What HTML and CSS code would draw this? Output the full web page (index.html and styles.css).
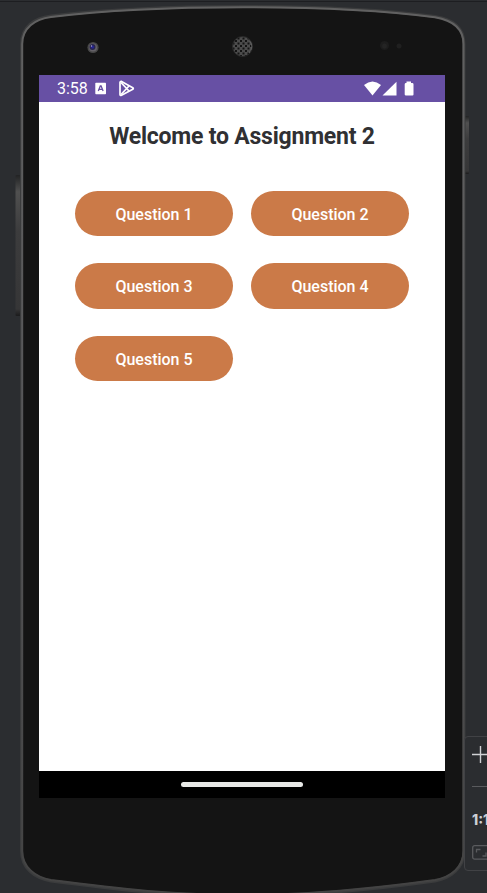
FILE: index.html
```
<!DOCTYPE html>
<html lang="en">
<head>
<meta charset="utf-8">
<title>Assignment 2</title>
<link rel="stylesheet" href="styles.css">
</head>
<body>
<div class="emulator">
  <svg class="device" width="487" height="893" viewBox="0 0 487 893" aria-hidden="true">
    <defs>
      <linearGradient id="key" x1="0" y1="0" x2="0" y2="1">
        <stop offset="0" stop-color="#222324"/><stop offset=".12" stop-color="#505050"/><stop offset=".4" stop-color="#3c3c3d"/><stop offset=".95" stop-color="#363637"/><stop offset="1" stop-color="#1b1b1c"/>
      </linearGradient>
      <linearGradient id="rim" x1="0" y1="0" x2="0" y2="1">
        <stop offset="0" stop-color="#616161"/><stop offset=".5" stop-color="#565658"/><stop offset="1" stop-color="#434343"/>
      </linearGradient>
      <pattern id="mesh" width="5" height="5" patternUnits="userSpaceOnUse">
        <rect width="5" height="5" fill="#4c4c4c"/>
        <path d="M0 0h2v2H0zM2.500 2.500h2v2h-2z" fill="#141414"/>
      </pattern>
    </defs>
    <path d="M0 1.500H487" stroke="#1d1e21"/>
    <rect x="15.500" y="175" width="5" height="141" rx="1" fill="url(#key)"/>
    <rect x="464" y="116" width="5" height="58" rx="1" fill="url(#key)"/>
    <path d="M21.500 44C21.500 27 34 18 51 16C105 9.500 170 6.500 243 6.500S381 9.500 435 16.500C452 19 464 27 464 44V851C464 868 451 878 435 881C370 890 310 896 243 896S120 890 51 881C34 878 21.500 868 21.500 851Z" fill="#141414" stroke="#3b3c3d" stroke-width="3"/>
    <path d="M22.200 44C22.200 28 35 19 51 17C105 10.200 170 7.200 243 7.200S381 10.200 435 17.200C451 20 463.500 28 463.500 44V851C463.500 867 451 877 435 880C370 889 310 895 243 895S120 889 51 880C35 877 22.200 867 22.200 851Z" fill="none" stroke="url(#rim)" stroke-width="2"/>
    <circle cx="93" cy="47.500" r="5.600" fill="#484848"/>
    <circle cx="93" cy="47.500" r="4" fill="#646167"/>
    <circle cx="92.500" cy="47" r="3" fill="#29264f"/>
    <circle cx="92.500" cy="47" r="1.500" fill="#252496"/>
    <circle cx="91.500" cy="46" r=".7" fill="#b3aed0"/>
    <circle cx="242.500" cy="46.500" r="10" fill="url(#mesh)" stroke="#292929"/>
    <path d="M250 41Q254 47 249 53" fill="none" stroke="#666" stroke-width=".8"/>
    <circle cx="384.500" cy="45.500" r="4.500" fill="#1d1d1d"/>
    <circle cx="384.500" cy="46" r="2.500" fill="#242424"/>
    <circle cx="399" cy="46" r="2.500" fill="#202020"/>
  </svg>

  <main class="screen">
    <header class="status-bar">
      <span class="clock">3:58</span>
      <svg class="app-icon" width="12" height="13" viewBox="0 0 12 13"><rect x=".3" y=".7" width="10.700" height="11.600" rx=".7" fill="#fff"/><path d="M3.300 9L5.300 4H6.100L8.100 9M4.200 7.300H7.200" fill="none" stroke="#6750a4" stroke-width="1.300"/></svg>
      <svg class="play-icon" width="16" height="17" viewBox="0 0 16 17" fill="none" stroke="#fff" stroke-width="1.700" stroke-linejoin="round"><path d="M2.500 1.400Q1 1.200 1 2.500V14.500Q1 15.800 2.500 15.300L13.800 9.300Q14.800 8.500 13.800 7.700Z"/><path d="M2 14.500L10 6M2 2.500L10 11"/></svg>
      <span class="status-spacer"></span>
      <svg width="50" height="16" viewBox="0 0 50 16" fill="#fff"><path d="M0 4Q8.500-3 17 4L8.500 14.500Z"/><path d="M18.500 14.500L32.500 .8V14.500Z"/><path d="M42.500 .5H47V2H48.200Q49.500 2 49.500 3.200V13.500Q49.500 14.500 48.500 14.500H42Q40.700 14.500 40.700 13.500V3.200Q40.700 2 42 2H42.500Z"/></svg>
    </header>
    <section class="content">
      <h1 class="title">Welcome to Assignment 2</h1>
      <div class="questions">
        <button class="question">Question 1</button>
        <button class="question">Question 2</button>
        <button class="question">Question 3</button>
        <button class="question">Question 4</button>
        <button class="question">Question 5</button>
      </div>
    </section>
    <footer class="nav-bar"><span class="nav-handle"></span></footer>
  </main>

  <aside class="zoom-panel">
    <svg class="plus" width="16" height="17" viewBox="0 0 16 17"><path d="M0 8.500H16M8.500 0V17" stroke="#d0d1d4" stroke-width="1.400"/></svg>
    <span class="divider"></span>
    <span class="ratio">1:1</span>
    <svg class="fit" width="20" height="15" viewBox="0 0 20 15" fill="none" stroke="#5a5b5e"><rect x=".7" y=".7" width="18" height="13.500" rx="2" stroke-width="1.300"/><path d="M4.500 7.500V4.500H8.500M10.500 11H14V7.500" stroke-width="1.300"/></svg>
  </aside>
</div>
</body>
</html>
```
FILE: styles.css
```
* {
  box-sizing: border-box;
}

body {
  margin: 0;
  overflow: hidden;
  background: #2b2d30;
  font-family: Roboto, sans-serif;
}

.emulator {
  position: relative;
  width: 487px;
  height: 893px;
  padding: 75px 0 0 39px;
  overflow: hidden;
}

.device {
  position: absolute;
  inset: 0;
}

.screen {
  position: relative;
  display: flex;
  flex-direction: column;
  width: 406px;
  height: 723px;
  background: #fff;
}

.status-bar {
  display: flex;
  align-items: center;
  height: 27px;
  padding: 0 31px 0 18px;
  background: #6750a4;
  color: #fff;
}

.clock {
  width: 37.5px;
  font-size: 16px;
  line-height: 27px;
}

.play-icon {
  margin-left: 12px;
}

.status-spacer {
  flex: 1;
}

.content {
  flex: 1;
  padding: 20px 36px 0;
}

.title {
  margin: 0;
  color: #303033;
  font-size: 23px;
  font-weight: 700;
  letter-spacing: -0.22px;
  line-height: 29px;
  text-align: center;
  white-space: nowrap;
}

.questions {
  display: grid;
  grid-template-columns: 158px 158px;
  gap: 27px 18px;
  margin-top: 40px;
}

.question {
  height: 45.3px;
  padding: 2px 0 0;
  border: 0;
  border-radius: 23px;
  background: #cb7a48;
  color: #fff;
  font: 500 16px Roboto, sans-serif;
  letter-spacing: 0;
}

.nav-bar {
  display: flex;
  align-items: center;
  justify-content: center;
  height: 27px;
  background: #000;
}

.nav-handle {
  width: 122px;
  height: 5px;
  border-radius: 3px;
  background: #e8e9e7;
}

.zoom-panel {
  position: absolute;
  top: 736px;
  left: 464px;
  display: flex;
  flex-direction: column;
  width: 40px;
  height: 135px;
  padding: 9px 0 0 7px;
  border: 1px solid #414245;
  border-radius: 4px;
  background: #2b2d30;
}

.plus {
  flex: none;
}

.divider {
  width: 24px;
  height: 1px;
  margin-top: 23px;
  background: #5a5b5e;
}

.ratio {
  margin-top: 25px;
  color: #ced0d6;
  font: 800 14px/16px Inter, sans-serif;
}

.fit {
  flex: none;
  margin-top: 17px;
}
```
